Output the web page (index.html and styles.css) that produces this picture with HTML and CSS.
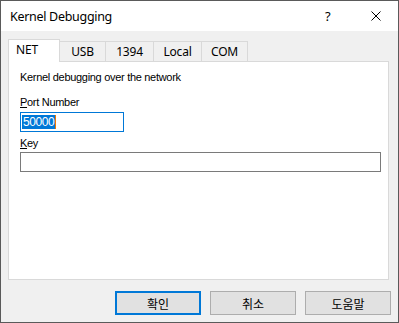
FILE: index.html
```html
<!DOCTYPE html>
<html>
<head>
    <meta charset="utf-8" />
    <title>Kernel Debugging</title>
    <link rel="stylesheet" href="styles.css">
</head>
<body>
    <div class="window">
        <div class="titlebar">
            <span class="title">Kernel Debugging</span>
            <span class="help">?</span>
            <span class="close">
                <svg width="10" height="10" viewBox="0 0 10 10">
                    <path d="M0.5 0.5 L9.5 9.5 M9.5 0.5 L0.5 9.5" stroke="#000" stroke-width="1" fill="none" />
                </svg>
            </span>
        </div>
        <div class="dlg">
            <div class="tabs">
                <div class="tab active">NET</div>
                <div class="tab t-usb">USB</div>
                <div class="tab t-1394">1394</div>
                <div class="tab t-local">Local</div>
                <div class="tab t-com">COM</div>
            </div>
            <div class="panel">
                <div class="desc">Kernel debugging over the network</div>
                <div class="lbl"><u>P</u>ort Number</div>
                <div class="field port focus"><span class="sel">50000</span><span class="caret"></span></div>
                <div class="lbl key-lbl"><u>K</u>ey</div>
                <div class="field key"></div>
            </div>
            <div class="buttons">
                <button class="btn default">확인</button>
                <button class="btn">취소</button>
                <button class="btn">도움말</button>
            </div>
        </div>
    </div>
</body>
</html>
```

FILE: styles.css
```css
* {
    box-sizing: border-box;
}

body {
    margin: 0;
    background: #3c3c3c;
    font-family: "Liberation Sans", Arial, sans-serif;
}

.window {
    width: 399px;
    height: 323px;
    border: 1px solid #5a5a5a;
    display: flex;
    flex-direction: column;
    background: #f0f0f0;
}

.titlebar {
    height: 30px;
    background: #fff;
    display: flex;
    align-items: center;
    font-family: "Noto Sans", sans-serif;
    font-size: 12px;
    color: #000;
}

    .titlebar .title {
        margin-left: 9px;
        flex: 1;
        letter-spacing: -0.3px;
        font-size: 12.5px;
    }

    .titlebar .help {
        width: 12px;
        margin-right: 34px;
        font-size: 13px;
    }

    .titlebar .close {
        width: 10px;
        height: 10px;
        margin-right: 17px;
        display: flex;
    }

.dlg {
    flex: 1;
    display: flex;
    flex-direction: column;
    padding: 8px 9px 7px 7px;
}

.tabs {
    display: flex;
    align-items: flex-end;
    height: 22px;
    font-family: "Noto Sans", sans-serif;
    font-size: 12px;
    letter-spacing: -0.2px;
}

.tab {
    height: 20px;
    border: 1px solid #d9d9d9;
    border-bottom: none;
    margin-left: -1px;
    line-height: 20px;
    background: #f0f0f0;
    color: #000;
    text-align: center;
}

    .tab:first-child {
        margin-left: 0;
    }

    .tab.active {
        position: relative;
        z-index: 1;
        width: 52px;
        height: 23px;
        margin-bottom: -1px;
        background: #fff;
        padding-left: 7px;
        text-align: left;
        line-height: 19px;
    }

.t-usb { width: 47px; }
.t-1394 { width: 49px; }
.t-local { width: 49px; }
.t-com { width: 47px; }

.panel {
    height: 219px;
    border: 1px solid #d9d9d9;
    background: #fff;
    padding: 8px 0 0 11px;
    font-size: 11px;
    letter-spacing: -0.3px;
    color: #000;
}

.desc {
    line-height: 15px;
}

.lbl {
    line-height: 15px;
    margin-top: 10px;
}

.key-lbl {
    margin-top: 4px;
}

.field {
    height: 20px;
    border: 1px solid #7a7a7a;
    background: #fff;
    margin-top: 2px;
    display: flex;
    align-items: center;
    padding-left: 1px;
}

    .field.focus {
        border-color: #0078d7;
    }

.port {
    width: 104px;
}

.key {
    width: 361px;
    margin-top: 1px;
}

.sel {
    background: #0078d7;
    color: #fff;
    line-height: 14px;
    padding: 0 1px;
    font-size: 12px;
    letter-spacing: -0.4px;
}

.caret {
    width: 1px;
    height: 14px;
    background: #f07800;
}

.buttons {
    display: flex;
    justify-content: flex-end;
    gap: 9px;
    margin-top: 11px;
    margin-right: -2px;
}

.btn {
    width: 86px;
    height: 24px;
    border: 1px solid #adadad;
    background: #e1e1e1;
    font-family: "Noto Sans CJK KR", sans-serif;
    font-size: 12px;
    color: #000;
    padding: 0;
}

    .btn.default {
        border: 2px solid #0078d7;
    }
```
